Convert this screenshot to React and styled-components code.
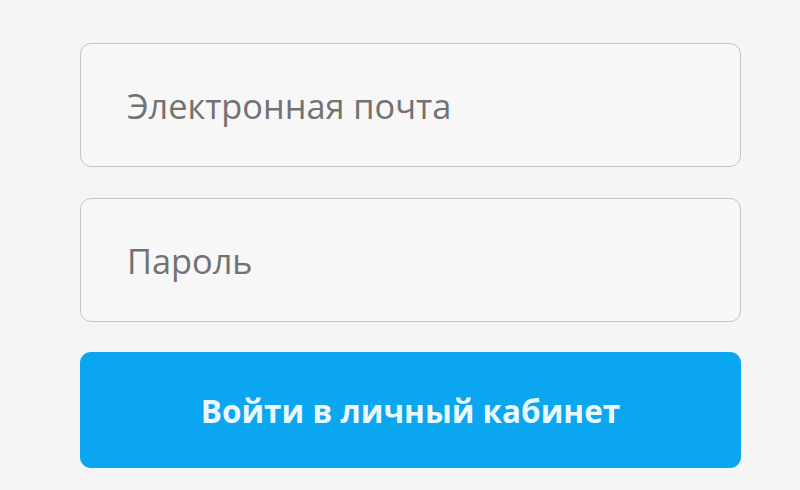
import React from 'react';
import styled, { createGlobalStyle } from 'styled-components';

const GlobalStyle = createGlobalStyle`
  html, body {
    margin: 0;
    padding: 0;
    background: #f5f5f5;
  }
  body {
    font-family: "Open Sans", "Liberation Sans", sans-serif;
  }
`;

const Page = styled.div`
  width: 800px;
  height: 490px;
  box-sizing: border-box;
  padding: 43px 59px 0 80px;
  background: #f5f5f5;
`;

const Form = styled.form`
  display: flex;
  flex-direction: column;
  width: 661px;
`;

const Field = styled.input`
  box-sizing: border-box;
  width: 100%;
  height: 124px;
  margin-bottom: ${props => props.gap}px;
  padding: 0 0 0 46px;
  border: 1.5px solid #c4c4c4;
  border-radius: 11px;
  background: #f7f7f7;
  font-family: inherit;
  font-size: 34.3px;
  font-weight: 500;
  color: #727272;
  outline: none;

  &::placeholder {
    color: #727272;
    opacity: 1;
  }
`;

const Submit = styled.button`
  box-sizing: border-box;
  width: 100%;
  height: 116px;
  border: 0;
  border-radius: 11px;
  background: #0aa6f0;
  color: #eaf8ff;
  font-family: inherit;
  font-size: 31.5px;
  font-weight: 700;
  cursor: pointer;
`;

const App = () => (
  <>
    <GlobalStyle />
    <Page>
      <Form onSubmit={e => e.preventDefault()}>
        <Field type="email" placeholder="Электронная почта" gap={31} />
        <Field type="password" placeholder="Пароль" gap={30} />
        <Submit type="submit">Войти в личный кабинет</Submit>
      </Form>
    </Page>
  </>
);

export default App;
